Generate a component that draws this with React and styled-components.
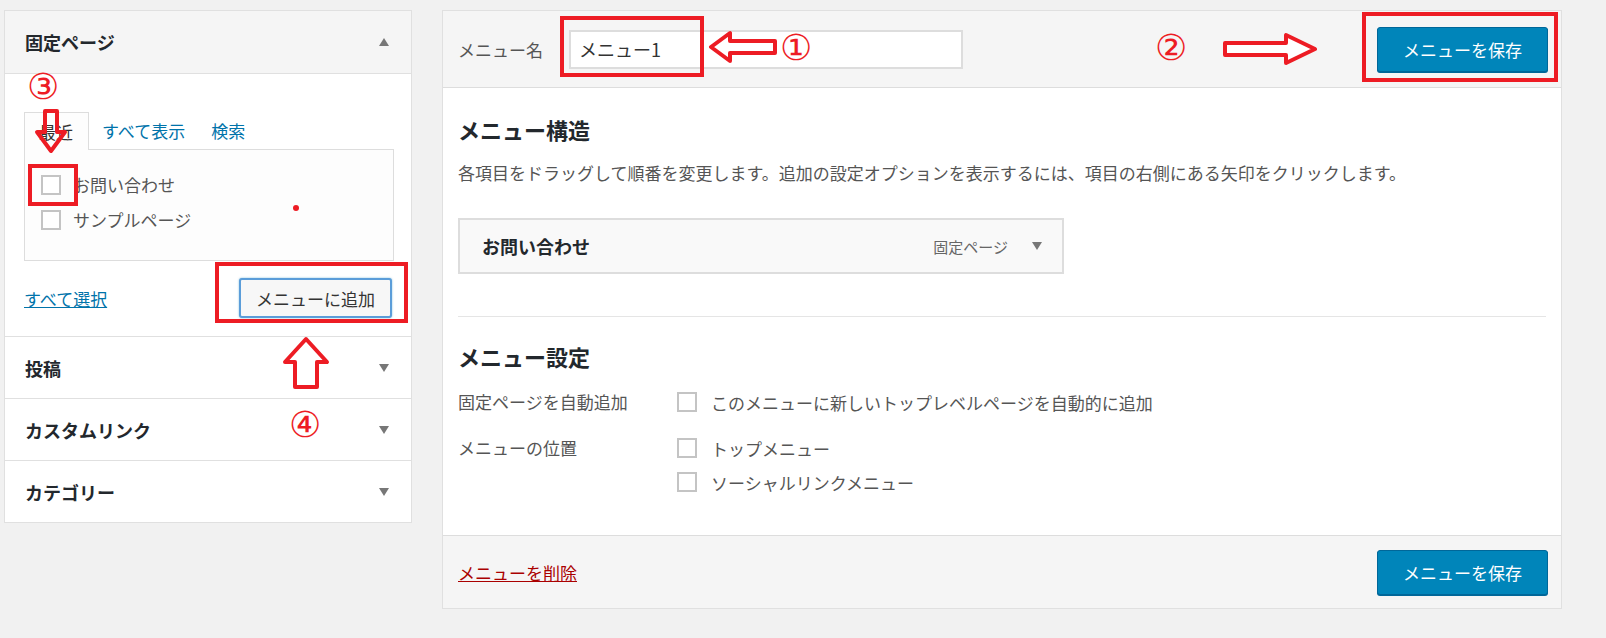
import React from "react";
import styled, { createGlobalStyle } from "styled-components";

const G = createGlobalStyle`
  body{margin:0;background:#f1f1f1;font-family:"Noto Sans CJK JP","Noto Sans",sans-serif;color:#444;}
`;
const Page = styled.div`position:relative;width:1606px;height:638px;display:flex;gap:30px;padding:10px 0 0 4px;box-sizing:border-box;align-items:flex-start;`;
const Left = styled.div`width:408px;background:#fff;border:1px solid #e0e0e0;box-sizing:border-box;`;
const SecHead = styled.div`height:62px;display:flex;align-items:center;justify-content:space-between;padding:0 22px 0 20px;background:${p=>p.open?"#f5f5f5":"#fff"};border-top:${p=>p.first?"none":"1px solid #e0e0e0"};font-weight:700;font-size:18px;color:#23282d;box-sizing:border-box;`;
const Tri = styled.span`width:0;height:0;border-left:5px solid transparent;border-right:5px solid transparent;${p=>p.up?"border-bottom:8px solid #777;":"border-top:8px solid #777;"}`;
const SecBody = styled.div`border-top:1px solid #e0e0e0;padding:37px 19px 18px 19px;`;
const Tabs = styled.div`display:flex;align-items:flex-end;height:38px;font-size:17px;`;
const Tab = styled.div`padding:0 ${p=>p.active?"14px":"13px"};height:38px;display:flex;align-items:center;box-sizing:border-box;color:${p=>p.active?"#333":"#0073aa"};${p=>p.active?"border:1px solid #ddd;border-bottom:none;background:#fdfdfd;width:65px;margin-bottom:-1px;position:relative;":""}`;
const TabBox = styled.div`border:1px solid #ddd;background:#fdfdfd;width:370px;height:112px;box-sizing:border-box;padding:22px 0 0 16px;display:flex;flex-direction:column;gap:10px;`;
const CheckRow = styled.label`display:flex;align-items:center;gap:12px;font-size:17px;color:#555;`;
const Box = styled.span`width:20px;height:20px;border:2px solid #c4c4c4;box-sizing:border-box;background:#fff;flex-shrink:0;`;
const Actions = styled.div`display:flex;justify-content:space-between;align-items:center;margin-top:17px;`;
const Link = styled.a`color:${p=>p.red?"#a00":"#0073aa"};text-decoration:underline;font-size:17px;`;
const Btn = styled.button`font-family:inherit;font-size:17px;height:40px;padding:0 15px;border:2px solid #5b9dd9;border-radius:3px;background:#f7f7f7;color:#333;box-shadow:0 0 2px rgba(30,140,190,.6);`;
const Right = styled.div`width:1120px;background:#fff;border:1px solid #e0e0e0;box-sizing:border-box;`;
const RHead = styled.div`height:76px;background:#f5f5f5;border-bottom:1px solid #ddd;display:flex;align-items:center;padding:0 13px 0 15px;`;
const Label = styled.span`font-size:17px;color:#555;width:111px;`;
const Input = styled.div`width:394px;height:39px;border:2px solid #ddd;background:#fff;box-sizing:border-box;display:flex;align-items:center;padding-left:8px;font-size:18px;color:#333;`;
const Primary = styled.button`margin-left:auto;font-family:inherit;height:45px;width:171px;background:#0085ba;border:1px solid #006799;border-radius:3px;color:#fff;font-size:17px;box-shadow:0 1px 0 #006799;`;
const RBody = styled.div`padding:24px 15px 36px;`;
const H2 = styled.h2`margin:0;font-size:22px;font-weight:700;color:#23282d;line-height:34px;`;
const Desc = styled.p`margin:14px 0 0;font-size:17px;color:#555;`;
const Item = styled.div`margin-top:33px;width:606px;height:56px;border:2px solid #ddd;background:#f9f9f9;box-sizing:border-box;display:flex;align-items:center;padding:0 20px 0 22px;font-weight:700;font-size:18px;color:#23282d;`;
const ItemType = styled.span`margin-left:auto;font-weight:400;font-size:15px;color:#666;margin-right:24px;`;
const Hr = styled.div`height:1px;background:#e5e5e5;margin:42px 0 22px;`;
const SetRow = styled.div`display:flex;margin-top:${p=>p.mt||0}px;`;
const SetLabel = styled.div`width:219px;font-size:17px;color:#555;line-height:34px;`;
const SetOpts = styled.div`display:flex;flex-direction:column;`;
const OptRow = styled(CheckRow)`height:34px;gap:14px;`;
const Foot = styled.div`border-top:1px solid #ddd;background:#f5f5f5;height:72px;display:flex;align-items:center;padding:0 13px 0 15px;`;

const Over = styled.div`position:absolute;left:${p=>p.x}px;top:${p=>p.y}px;width:${p=>p.w}px;height:${p=>p.h}px;border:4px solid #ed1c24;box-sizing:border-box;`;
const Num = styled.div`position:absolute;left:${p=>p.x}px;top:${p=>p.y}px;color:#ed1c24;font-family:"Liberation Serif","DejaVu Serif",serif;font-size:36px;line-height:1;`;
const Arrow = styled.svg`position:absolute;left:${p=>p.x}px;top:${p=>p.y}px;`;
const Dot = styled.div`position:absolute;left:293px;top:205px;width:6px;height:6px;border-radius:50%;background:#ed1c24;`;

export default function App(){
  return (<><G/><Page>
    <Left>
      <SecHead open first>固定ページ<Tri up/></SecHead>
      <SecBody>
        <Tabs><Tab active>最近</Tab><Tab>すべて表示</Tab><Tab>検索</Tab></Tabs>
        <TabBox>
          <CheckRow><Box/>お問い合わせ</CheckRow>
          <CheckRow><Box/>サンプルページ</CheckRow>
        </TabBox>
        <Actions><Link>すべて選択</Link><Btn>メニューに追加</Btn></Actions>
      </SecBody>
      <SecHead>投稿<Tri/></SecHead>
      <SecHead>カスタムリンク<Tri/></SecHead>
      <SecHead>カテゴリー<Tri/></SecHead>
    </Left>
    <Right>
      <RHead><Label>メニュー名</Label><Input>メニュー1</Input><Primary>メニューを保存</Primary></RHead>
      <RBody>
        <H2>メニュー構造</H2>
        <Desc>各項目をドラッグして順番を変更します。追加の設定オプションを表示するには、項目の右側にある矢印をクリックします。</Desc>
        <Item>お問い合わせ<ItemType>固定ページ</ItemType><Tri/></Item>
        <Hr/>
        <H2>メニュー設定</H2>
        <SetRow mt={12}><SetLabel>固定ページを自動追加</SetLabel><SetOpts><OptRow><Box/>このメニューに新しいトップレベルページを自動的に追加</OptRow></SetOpts></SetRow>
        <SetRow mt={12}><SetLabel>メニューの位置</SetLabel><SetOpts><OptRow><Box/>トップメニュー</OptRow><OptRow><Box/>ソーシャルリンクメニュー</OptRow></SetOpts></SetRow>
      </RBody>
      <Foot><Link red>メニューを削除</Link><Primary>メニューを保存</Primary></Foot>
    </Right>
    <Over x={560} y={16} w={144} h={61}/>
    <Over x={1362} y={12} w={196} h={70}/>
    <Over x={28} y={164} w={50} h={42}/>
    <Over x={215} y={262} w={193} h={61}/>
    <Dot/>
    <Num x={780} y={30}>①</Num>
    <Num x={1155} y={30}>②</Num>
    <Num x={27} y={69}>③</Num>
    <Num x={289} y={407}>④</Num>
    <Arrow x={708} y={30} width={70} height={34}><polygon points="3,17 22,3 22,11 67,11 67,23 22,23 22,31" fill="#fff" stroke="#ed1c24" strokeWidth="4" strokeLinejoin="round"/></Arrow>
    <Arrow x={1222} y={32} width={96} height={34}><polygon points="93,17 64,3 64,11 3,11 3,23 64,23 64,31" fill="#fff" stroke="#ed1c24" strokeWidth="4" strokeLinejoin="round"/></Arrow>
    <Arrow x={34} y={108} width={34} height={46}><polygon points="17,43 3,24 11,24 11,3 23,3 23,24 31,24" fill="none" stroke="#ed1c24" strokeWidth="4" strokeLinejoin="round"/></Arrow>
    <Arrow x={282} y={336} width={48} height={54}><polygon points="24,3 45,26 35,26 35,51 13,51 13,26 3,26" fill="#fff" stroke="#ed1c24" strokeWidth="4" strokeLinejoin="round"/></Arrow>
  </Page></>);
}
